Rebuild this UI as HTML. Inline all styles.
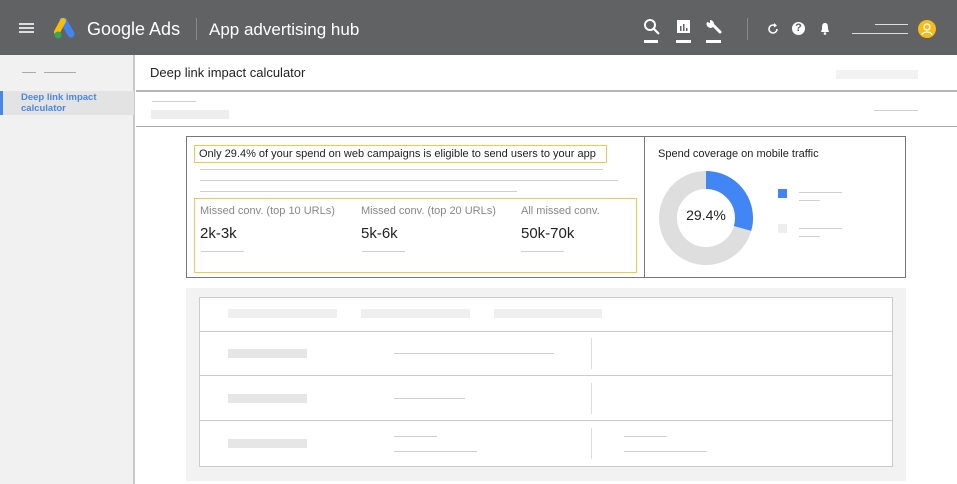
<!DOCTYPE html>
<html><head><style>
*{margin:0;padding:0;box-sizing:border-box}
body{width:957px;height:484px;overflow:hidden;background:#fff;font-family:"Liberation Sans",sans-serif;position:relative}
.a{position:absolute}
.ln{position:absolute;height:1px;background:#d0d0d0}
.bl{position:absolute;background:#eeeeee}
</style></head><body>
<div class="a" style="left:0;top:0;width:957px;height:55px;background:#616264"></div>
<div class="a" style="left:19px;top:23px;width:15px;height:2px;background:#ddd;box-shadow:0 4px 0 #ddd,0 8px 0 #ddd"></div>
<svg class="a" style="left:54px;top:18px" width="24" height="22" viewBox="0 0 24 22"><path d="M9 2 L17 16" stroke="#4285f4" stroke-width="7" stroke-linecap="round"/><path d="M9 3 L3 14" stroke="#fbbc04" stroke-width="6" stroke-linecap="round"/><circle cx="4" cy="17" r="3.5" fill="#34a853"/></svg>
<div class="a" style="left:87px;top:19px;color:#fff;font-size:18px">Google Ads</div>
<div class="a" style="left:196px;top:18px;width:1px;height:22px;background:#888"></div>
<div class="a" style="left:209px;top:20px;color:#fff;font-size:17px">App advertising hub</div>
<svg class="a" style="left:643px;top:18px" width="18" height="26"><circle cx="7" cy="7" r="5" stroke="#fff" stroke-width="2" fill="none"/><path d="M11 11 L16 16" stroke="#fff" stroke-width="2.2"/><rect x="1" y="22" width="14" height="3" fill="#fff"/></svg>
<svg class="a" style="left:676px;top:19px" width="16" height="25"><rect x="1" y="1" width="13" height="13" fill="#fff"/><rect x="4" y="7" width="1.5" height="5" fill="#616264"/><rect x="7" y="5" width="1.5" height="7" fill="#616264"/><rect x="10" y="9" width="1.5" height="3" fill="#616264"/><rect x="0" y="21" width="15" height="3" fill="#fff"/></svg>
<svg class="a" style="left:705px;top:18px" width="18" height="26"><path d="M8 7 L15 14" stroke="#fff" stroke-width="3" stroke-linecap="round"/><path d="M2 4 A4 4 0 0 0 8 9 L9 6 A4 4 0 0 0 5 2 L5 5Z" fill="#fff"/><rect x="1" y="22" width="15" height="3" fill="#fff"/></svg>
<div class="a" style="left:747px;top:18px;width:1px;height:22px;background:#888"></div>
<svg class="a" style="left:767px;top:23px" width="12" height="12"><path d="M10 6 A4 4 0 1 1 8 2.5" stroke="#fff" stroke-width="1.5" fill="none"/><path d="M7 0 L10 2.5 L7 4.5Z" fill="#fff"/></svg>
<div class="a" style="left:792px;top:22px;width:13px;height:13px;border-radius:50%;background:#fff;color:#616264;font-size:11px;font-weight:bold;text-align:center;line-height:13px">?</div>
<svg class="a" style="left:820px;top:22px" width="10" height="13"><path d="M5 1 C2 1 2 4 2 7 L1 10 L9 10 L8 7 C8 4 8 1 5 1Z" fill="#fff"/><circle cx="5" cy="11.5" r="1.3" fill="#fff"/></svg>
<div class="a" style="left:875px;top:24px;width:33px;height:1px;background:#ddd"></div>
<div class="a" style="left:852px;top:33px;width:56px;height:1px;background:#ddd"></div>
<div class="a" style="left:918px;top:20px;width:18px;height:18px;border-radius:50%;background:#f9bc15"></div>
<svg class="a" style="left:918px;top:20px" width="18" height="18"><circle cx="9" cy="7" r="3" stroke="#fff" stroke-width="1.3" fill="none"/><path d="M4 15 C5 11 13 11 14 15" stroke="#fff" stroke-width="1.3" fill="none"/></svg>
<div class="a" style="left:0;top:55px;width:135px;height:429px;background:#f1f1f1;border-right:2px solid #c8c8c8"></div>
<div class="a" style="left:22px;top:72px;width:14px;height:1px;background:#aaa"></div>
<div class="a" style="left:44px;top:72px;width:32px;height:1px;background:#aaa"></div>
<div class="a" style="left:0;top:91px;width:134px;height:24px;background:#e3e3e3;border-left:3px solid #4a86e8"></div>
<div class="a" style="left:21px;top:92px;color:#4a86e8;font-size:9.5px;font-weight:bold;line-height:11px">Deep link impact<br>calculator</div>
<div class="a" style="left:150px;top:65px;font-size:13px;color:#222">Deep link impact calculator</div>
<div class="bl" style="left:836px;top:70px;width:82px;height:9px;background:#f2f2f2"></div>
<div class="a" style="left:136px;top:90px;width:821px;height:2px;background:#b5b5b5"></div>
<div class="ln" style="left:152px;top:101px;width:44px"></div>
<div class="bl" style="left:151px;top:110px;width:78px;height:9px"></div>
<div class="ln" style="left:874px;top:110px;width:44px"></div>
<div class="a" style="left:136px;top:126px;width:821px;height:1px;background:#aaa"></div>
<div class="a" style="left:186px;top:136px;width:720px;height:142px;border:1px solid #777"></div>
<div class="a" style="left:644px;top:136px;width:1px;height:142px;background:#777"></div>
<div class="a" style="left:194px;top:145px;width:413px;height:18px;border:1px solid #f0c850"></div>
<div class="a" style="left:199px;top:148px;font-size:11px;color:#222">Only 29.4% of your spend on web campaigns is eligible to send users to your app</div>
<div class="ln" style="left:200px;top:169px;width:403px"></div>
<div class="ln" style="left:200px;top:180px;width:418px"></div>
<div class="ln" style="left:200px;top:191px;width:317px"></div>
<div class="a" style="left:194px;top:198px;width:443px;height:75px;border:1px solid #f0c850"></div>
<div class="a" style="left:200px;top:205px;font-size:11px;color:#888">Missed conv. (top 10 URLs)</div>
<div class="a" style="left:361px;top:205px;font-size:11px;color:#888">Missed conv. (top 20 URLs)</div>
<div class="a" style="left:521px;top:205px;font-size:11px;color:#888">All missed conv.</div>
<div class="a" style="left:200px;top:225px;font-size:15px;color:#222">2k-3k</div>
<div class="a" style="left:361px;top:225px;font-size:15px;color:#222">5k-6k</div>
<div class="a" style="left:521px;top:225px;font-size:15px;color:#222">50k-70k</div>
<div class="ln" style="left:201px;top:251px;width:43px"></div>
<div class="ln" style="left:362px;top:251px;width:43px"></div>
<div class="ln" style="left:521px;top:251px;width:43px"></div>
<div class="a" style="left:658px;top:148px;font-size:11px;color:#222">Spend coverage on mobile traffic</div>
<svg class="a" style="left:659px;top:171px" width="94" height="94" viewBox="0 0 94 94"><circle cx="47" cy="47" r="38" fill="none" stroke="#dedede" stroke-width="18"/><circle cx="47" cy="47" r="38" fill="none" stroke="#4285f4" stroke-width="18" stroke-dasharray="70.2 300" transform="rotate(-90 47 47)"/></svg>
<div class="a" style="left:659px;top:207px;width:94px;text-align:center;font-size:14px;color:#222">29.4%</div>
<div class="a" style="left:778px;top:189px;width:9px;height:9px;background:#4285f4"></div>
<div class="a" style="left:778px;top:224px;width:9px;height:9px;background:#eee"></div>
<div class="ln" style="left:799px;top:192px;width:43px"></div>
<div class="ln" style="left:799px;top:200px;width:21px"></div>
<div class="ln" style="left:799px;top:228px;width:43px"></div>
<div class="ln" style="left:799px;top:236px;width:21px"></div>
<div class="a" style="left:186px;top:288px;width:720px;height:193px;background:#f2f2f2"></div>
<div class="a" style="left:199px;top:297px;width:694px;height:170px;background:#fff;border:1px solid #ccc"></div>
<div class="bl" style="left:228px;top:309px;width:109px;height:9px;background:#efefef"></div>
<div class="bl" style="left:361px;top:309px;width:109px;height:9px;background:#efefef"></div>
<div class="bl" style="left:494px;top:309px;width:108px;height:9px;background:#efefef"></div>
<div class="a" style="left:199px;top:331px;width:694px;height:1px;background:#ccc"></div>
<div class="a" style="left:199px;top:375px;width:694px;height:1px;background:#ccc"></div>
<div class="a" style="left:199px;top:420px;width:694px;height:1px;background:#ccc"></div>
<div class="bl" style="left:228px;top:349px;width:79px;height:9px;background:#e6e6e6"></div>
<div class="bl" style="left:228px;top:394px;width:79px;height:9px;background:#e6e6e6"></div>
<div class="bl" style="left:228px;top:439px;width:79px;height:9px;background:#e6e6e6"></div>
<div class="ln" style="left:394px;top:353px;width:160px"></div>
<div class="ln" style="left:394px;top:398px;width:71px"></div>
<div class="ln" style="left:394px;top:436px;width:43px"></div>
<div class="ln" style="left:394px;top:451px;width:83px"></div>
<div class="ln" style="left:624px;top:436px;width:43px"></div>
<div class="ln" style="left:624px;top:451px;width:83px"></div>
<div class="a" style="left:591px;top:338px;width:1px;height:31px;background:#ddd"></div>
<div class="a" style="left:591px;top:383px;width:1px;height:31px;background:#ddd"></div>
<div class="a" style="left:591px;top:428px;width:1px;height:31px;background:#ddd"></div>
</body></html>
